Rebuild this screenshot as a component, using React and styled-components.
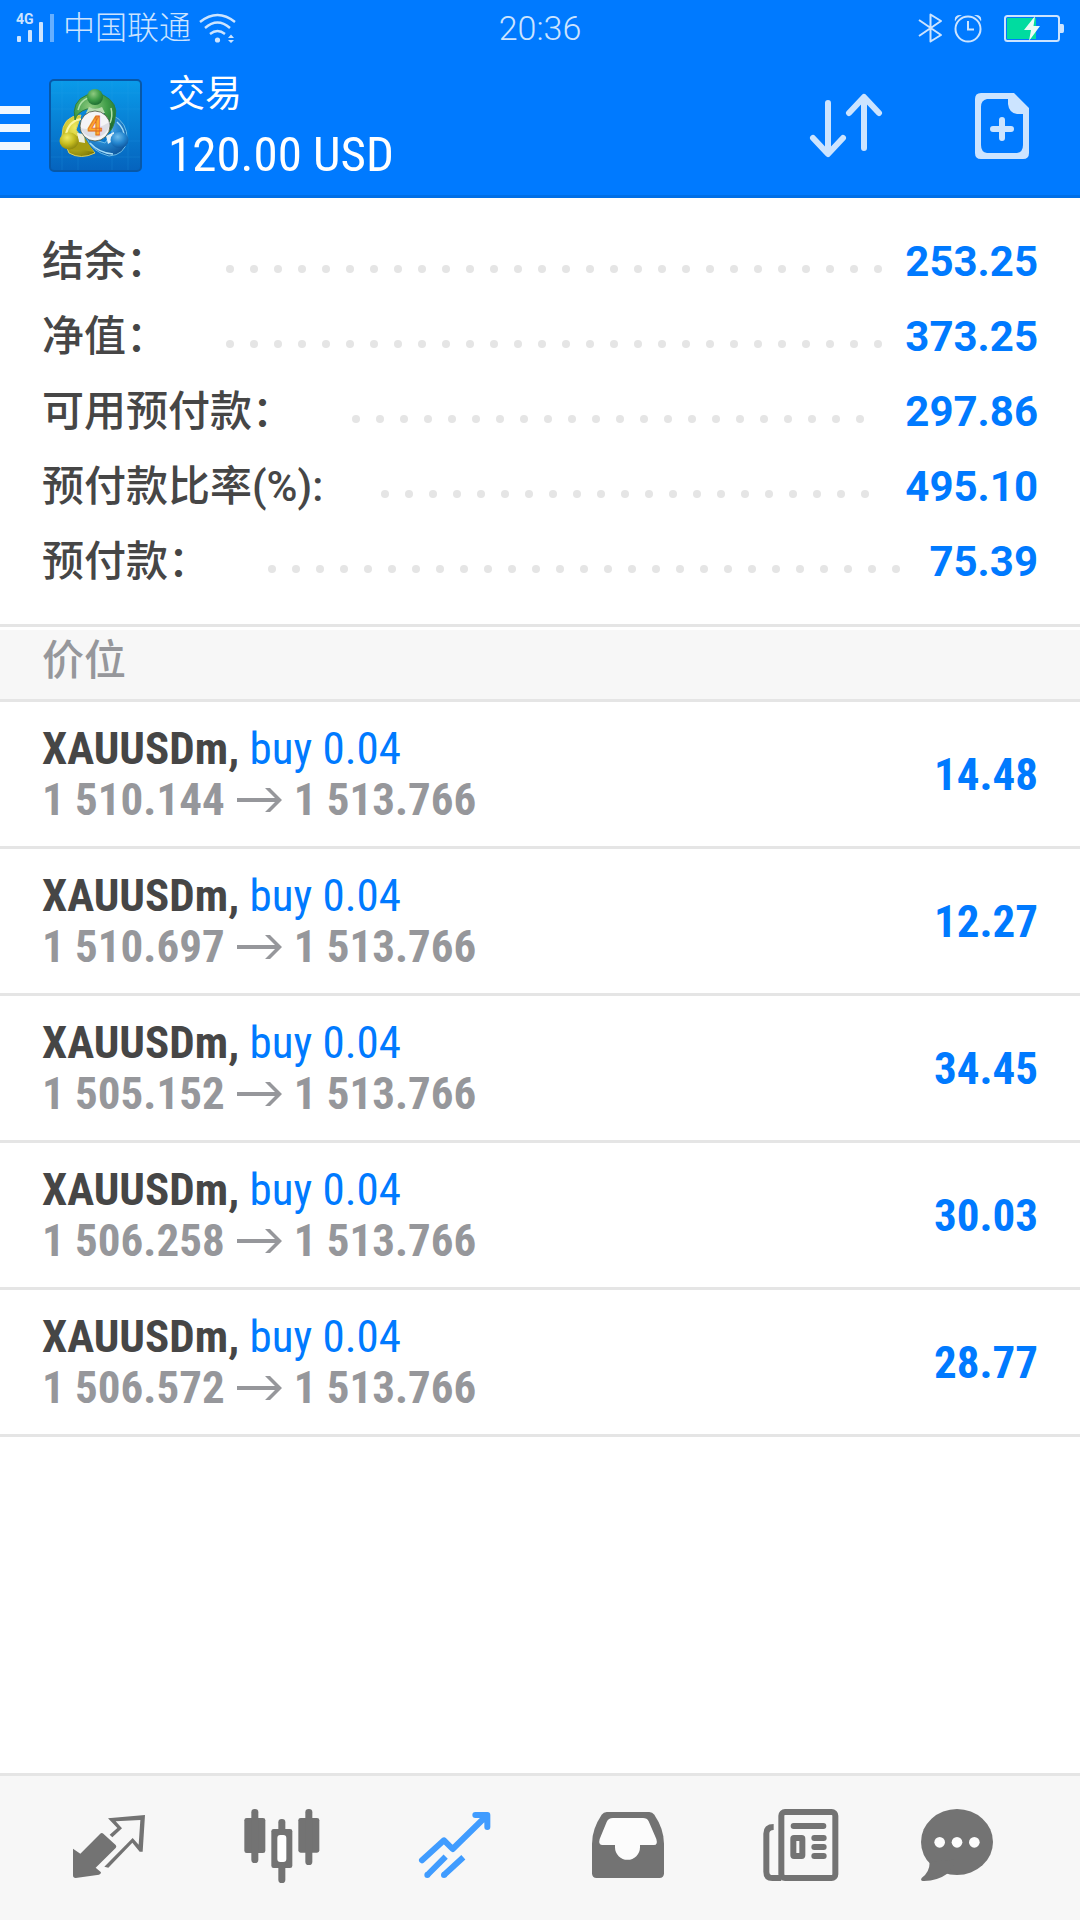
import React from 'react';
import styled, {createGlobalStyle} from "styled-components";

const GlobalStyle = createGlobalStyle`
	:root {
		--blue: #007aff;
		--active: #409cff;
		--text: #464646;
		--muted: #96979b;
		--line: #e5e5e5;
		--panel: #f7f7f7;
		--icon: #737373;
		--soft: #cce4ff;
		--sans: Roboto, "Noto Sans CJK SC", sans-serif;
		--narrow: "Roboto Condensed", "Liberation Sans Narrow", Roboto, "Noto Sans CJK SC", sans-serif;
	}

	* {
		box-sizing: border-box;
	}

	body {
		margin: 0;
		background: #fff;
		font-family: var(--sans);
	}

	svg {
		display: block;
	}
`;

const Page = styled.div`
	min-height: 100vh;
	display: flex;
	flex-direction: column;
`;

const Header = styled.header`
	background: var(--blue);
	border-bottom: 3px solid #006fe6;
`;

const StatusBar = styled.div`
	height: 56px;
	padding: 0 16px;
	display: grid;
	grid-template-columns: 1fr auto 1fr;
	align-items: center;
	color: var(--soft);
	font-size: 34px;
	font-weight: 300;
	line-height: 56px;
`;

const StatusGroup = styled.div`
	display: flex;
	align-items: center;
	justify-content: ${props => props.$end ? "flex-end" : "flex-start"};
	gap: ${props => props.$end ? "11px" : "8px"};
`;

const Carrier = styled.span`
	font-size: 32px;
`;

const Toolbar = styled.div`
	height: 139px;
	padding-right: 51px;
	display: flex;
	align-items: center;
`;

const IconButton = styled.button`
	border: 0;
	padding: 0;
	background: none;
	color: var(--soft);
	cursor: pointer;
`;

const MenuButton = styled(IconButton)`
	width: 30px;
	margin-right: 19px;
	padding-top: 4px;
	display: flex;
	flex-direction: column;
	gap: 10px;

	span {
		height: 8px;
		width: 100%;
		background: #f0f7ff;
	}
`;

const Heading = styled.div`
	flex: 1;
	margin-left: 25px;
	padding-top: 4px;
	color: #fff;
`;

const Title = styled.h1`
	margin: 0;
	font-size: 37px;
	font-weight: 400;
	line-height: 54px;
`;

const Total = styled.div`
	font-family: var(--narrow);
	font-size: 49px;
	line-height: 66px;
`;

const Actions = styled.div`
	display: flex;
	align-items: center;
	gap: 91px;
`;

const Summary = styled.dl`
	margin: 0;
	padding: 26px 42px 25px;
	border-bottom: 3px solid var(--line);
`;

const SummaryRow = styled.div`
	height: 75px;
	display: flex;
	align-items: center;
	font-size: 42px;
	line-height: 75px;
`;

const Label = styled.dt`
	color: var(--text);
	font-weight: 500;
	white-space: nowrap;
`;

const Leader = styled.div`
	flex: 1;
	height: 8px;
	margin: 14px 19px 0 58px;
	display: flex;
	flex-wrap: wrap;
	gap: 16px;
	overflow: hidden;

	i {
		width: 8px;
		height: 8px;
		border-radius: 50%;
		background: var(--line);
	}
`;

const Value = styled.dd`
	margin: 0;
	color: var(--blue);
	font-weight: 700;
`;

const SectionTitle = styled.h2`
	height: 72px;
	margin: 3px 0 0;
	padding: 0 42px;
	background: var(--panel);
	border-bottom: 3px solid var(--line);
	color: var(--muted);
	font-size: 42px;
	font-weight: 500;
	line-height: 62px;
`;

const List = styled.ul`
	margin: 0;
	padding: 0;
	list-style: none;
`;

const Position = styled.li`
	padding: 21px 42px;
	display: flex;
	align-items: center;
	justify-content: space-between;
	border-bottom: 3px solid var(--line);
	font-family: var(--narrow);
	font-size: 45px;
	font-weight: 700;
	line-height: 51px;
`;

const Symbol = styled.div`
	color: var(--text);

	span {
		color: var(--blue);
		font-weight: 400;
	}
`;

const Prices = styled.div`
	display: flex;
	align-items: center;
	gap: 12px;
	color: var(--muted);
`;

const Profit = styled.div`
	color: var(--blue);
`;

const TabBar = styled.nav`
	height: 147px;
	margin-top: auto;
	padding: 0 53px 0 22px;
	display: grid;
	grid-template-columns: repeat(5, 173fr) 140fr;
	background: var(--panel);
	border-top: 3px solid var(--line);
`;

const Tab = styled.button`
	border: 0;
	padding: 0;
	background: none;
	display: flex;
	align-items: center;
	justify-content: center;
	color: ${props => props.$active ? "var(--active)" : "var(--icon)"};
	cursor: pointer;

	svg {
		width: 78px;
		height: 78px;
	}
`;

const SignalIcon = () => (
	<svg width="39" height="36" viewBox="0 -4 39 36" fill="currentColor">
		<text x="0" y="10" fontSize="14" fontWeight="700" fontFamily="Roboto, sans-serif">4G</text>
		<rect x="1" y="22" width="4" height="6" rx="1"/>
		<rect x="12" y="16" width="4" height="12" rx="1"/>
		<rect x="23" y="8" width="4" height="20" rx="1"/>
		<rect x="34" y="0" width="4" height="28" opacity=".5"/>
	</svg>
);

const WifiIcon = () => (
	<svg width="38" height="30" viewBox="0 0 38 30" fill="none" stroke="currentColor" strokeWidth="2.4">
		<path d="M1 9Q18.500-5 36 9M6 15Q18.500 4 31 15M11 21Q18.500 15 26 21"/>
		<circle cx="18.500" cy="27" r="2.600" fill="currentColor" stroke="none"/>
		<path d="M29 25L32 21.500L35 25ZM29 27L32 30L35 27Z" fill="currentColor" stroke="none"/>
	</svg>
);

const BluetoothIcon = () => (
	<svg width="25" height="30" viewBox="0 0 25 30" fill="none" stroke="currentColor" strokeWidth="2" strokeLinejoin="round">
		<path d="M1 7L23 22L12.500 28.500V1.500L23 8L1 23"/>
	</svg>
);

const AlarmIcon = () => (
	<svg width="28" height="30" viewBox="0 0 28 30" fill="none" stroke="currentColor" strokeWidth="2">
		<circle cx="14" cy="16" r="12.500"/>
		<path d="M14 8V16.500H20"/>
		<path d="M1 8.500Q-.5 1 8 2Q3 4 1 8.500ZM27 8.500Q28.500 1 20 2Q25 4 27 8.500Z" fill="currentColor" stroke="none"/>
	</svg>
);

const BatteryIcon = () => (
	<svg width="60" height="27" viewBox="0 0 60 27">
		<rect x="1" y="1" width="54" height="25" rx="2.500" fill="none" stroke="currentColor" strokeWidth="2"/>
		<rect x="3" y="3" width="29" height="21" fill="#00dca0"/>
		<path d="M56 9H58.500Q60 9 60 11V16Q60 18 58.500 18H56Z" fill="currentColor"/>
		<path d="M31 1L20 15H27L25 26L36 11H29.500Z" fill="#e9fbf5"/>
	</svg>
);

const LogoIcon = () => (
	<svg width="94" height="94" viewBox="0 0 94 94" role="img" aria-label="MetaTrader 4">
		<defs>
			<linearGradient id="tile" x1="0" y1="0" x2="0" y2="1">
				<stop offset="0" stopColor="#0a9bea"/>
				<stop offset="1" stopColor="#0563bd"/>
			</linearGradient>
			<radialGradient id="green" cx=".4" cy=".3" r=".8">
				<stop offset="0" stopColor="#8fca80"/>
				<stop offset=".5" stopColor="#3f9d48"/>
				<stop offset="1" stopColor="#14602a"/>
			</radialGradient>
			<radialGradient id="yellow" cx=".4" cy=".3" r=".8">
				<stop offset="0" stopColor="#f0ea62"/>
				<stop offset=".5" stopColor="#c4bb1f"/>
				<stop offset="1" stopColor="#7c7708"/>
			</radialGradient>
			<radialGradient id="blue" cx=".4" cy=".3" r=".8">
				<stop offset="0" stopColor="#6fbcec"/>
				<stop offset=".5" stopColor="#2486cf"/>
				<stop offset="1" stopColor="#0a4d94"/>
			</radialGradient>
		</defs>
		<rect x="1" y="1" width="91" height="91" rx="4" fill="url(#tile)" stroke="#0758a8" strokeWidth="2"/>
		<path d="M13 2V91M29 2V91M63 2V91M79 2V91M2 14H91M2 30H91M2 62H91M2 78H91" stroke="#2ca5ea" strokeWidth="1" opacity=".2"/>
		<path d="M32 36Q13 37 13 57L20 74Q32 81 46 74L35 61L27 51Z" fill="url(#yellow)" stroke="#d8d060" strokeWidth="1"/>
		<path d="M32 40Q20 42 17 55" fill="none" stroke="#fbf6a5" strokeWidth="2"/>
		<path d="M20 63Q29 55 34 56L45 73Q31 70 20 71Z" fill="#a59c12"/>
		<path d="M28 54L35 55L36 64L30 63Z" fill="#eef0df"/>
		<path d="M63 36Q79 43 78 61Q76 76 60 77Q43 73 37 58L56 64L63 54Z" fill="url(#blue)" stroke="#6bbce8" strokeWidth="1"/>
		<path d="M68 43Q76 50 75 59M41 64Q50 74 64 75" fill="none" stroke="#a3dcf9" strokeWidth="1.500"/>
		<path d="M57 57L65 53L65 61L59 65Z" fill="#e2f1fa"/>
		<path d="M26 41Q22 22 38 16H54Q70 24 66 39Q65 50 58 55L57 42Q57 32 49 30H38Q28 33 26 41Z" fill="url(#green)" stroke="#2f7f3d" strokeWidth="1"/>
		<path d="M29 31Q31 22 39 19M62 29Q64 37 61 44" fill="none" stroke="#b0e0a8" strokeWidth="1.500"/>
		<path d="M40 28Q46 31 53 28L56 34H37Z" fill="#b9dcb0"/>
		<circle cx="46" cy="18" r="8" fill="url(#green)"/>
		<ellipse cx="20" cy="62" rx="9.500" ry="8.500" fill="url(#yellow)"/>
		<ellipse cx="70.500" cy="61" rx="9" ry="8" fill="url(#blue)"/>
		<circle cx="46" cy="47" r="15" fill="#f4f4f6" stroke="#47543b" strokeWidth=".8"/>
		<path d="M31.500 49Q45 53 60.500 43A15 15 0 0 1 31.500 49Z" fill="#dddde4"/>
		<text x="46" y="56" fontSize="26" fontWeight="700" textAnchor="middle" fill="#ffac2c" stroke="#e06a25" strokeWidth=".8" fontFamily="Roboto, sans-serif">4</text>
	</svg>
);

const SortIcon = () => (
	<svg width="76" height="66" viewBox="0 0 76 66" fill="none" stroke="currentColor" strokeWidth="6" strokeLinecap="round" strokeLinejoin="round">
		<path d="M20 10V60M5 45L20 61L35 45M56 55V6M41 20L56 4L71 20"/>
	</svg>
);

const NewOrderIcon = () => (
	<svg width="54" height="66" viewBox="0 0 54 66" fill="currentColor">
		<path fillRule="evenodd" d="M6 0H39L54 15V60Q54 66 48 66H6Q0 66 0 60V6Q0 0 6 0ZM12 6Q6 7 6 14V52Q6 59 12 60H42Q48 59 48 52V21H42Q34 20 33 11V6Z"/>
		<path d="M27 27V45M18 36H36" stroke="currentColor" strokeWidth="6" strokeLinecap="round"/>
	</svg>
);

const PriceArrow = () => (
	<svg width="45" height="26" viewBox="0 0 45 26" fill="currentColor">
		<path d="M0 11H38L28 1H33L45 13L33 25H28L38 15H0Z"/>
	</svg>
);

const QuotesIcon = () => (
	<svg viewBox="0 0 234 234" fill="currentColor">
		<path d="M9 119L31 134L90 75Q95 70 100 74L137 108Q141 113 137 117L77 176L93 190Q93 196 87 197L17 207Q9 207 9 199Z"/>
		<path d="M114 28L225 18L218 128H209L187 101L115 176L103 173L188 87L206 107L211 33L137 37L156 58L127 85L119 77L142 57Z"/>
	</svg>
);

const ChartIcon = () => (
	<svg viewBox="0 0 234 234" fill="currentColor">
		<rect x="4" y="27" width="63" height="105" rx="7"/>
		<rect x="25" y="0" width="21" height="162" rx="10"/>
		<rect x="85" y="60" width="63" height="117" rx="7"/>
		<rect x="106" y="30" width="21" height="192" rx="10"/>
		<rect x="103" y="78" width="27" height="81" rx="9" fill="#fff"/>
		<rect x="166" y="27" width="63" height="104" rx="7"/>
		<rect x="187" y="0" width="21" height="168" rx="10"/>
	</svg>
);

const TradeIcon = () => (
	<svg viewBox="0 0 234 234" fill="none" stroke="currentColor" strokeWidth="18">
		<path d="M18 154L84 94L110 120L211 21M178 18H214V54" strokeLinecap="round" strokeLinejoin="round"/>
		<path d="M34 198L89 143M84 198L142 145"/>
		<circle cx="34" cy="198" r="9" fill="currentColor" stroke="none"/>
		<circle cx="84" cy="198" r="9" fill="currentColor" stroke="none"/>
	</svg>
);

const HistoryIcon = () => (
	<svg viewBox="0 0 234 234" fill="currentColor">
		<path d="M53 9H181Q190 9 196 17Q225 60 225 104V193Q225 207 211 207H23Q9 207 9 193V104Q9 60 38 17Q44 9 53 9Z"/>
		<path d="M72 27H162Q174 27 179 37L202 90Q207 108 195 108H153V115A37.500 37.500 0 0 1 78 115V108H41Q27 108 32 90L53 39Q58 27 72 27Z" fill="#fcfcfc"/>
	</svg>
);

const NewsIcon = () => (
	<svg viewBox="0 0 234 234" fill="none" stroke="currentColor" strokeWidth="18">
		<rect x="58" y="9" width="162" height="198" rx="11"/>
		<path d="M35 54Q13 54 13 74V188Q13 207 31 207H58"/>
		<path d="M95 51H184M157 87H185M157 114H185M157 141H185" strokeLinecap="round"/>
		<rect x="94" y="87" width="27" height="54" rx="2"/>
	</svg>
);

const ChatIcon = () => (
	<svg viewBox="0 0 234 234" fill="currentColor">
		<ellipse cx="117" cy="99" rx="108" ry="99"/>
		<path d="M35 160Q35 190 11 207Q6 215 15 216Q57 217 90 193L120 150Z"/>
		<circle cx="65" cy="100" r="16" fill="#fcfcfc"/>
		<circle cx="117" cy="100" r="16" fill="#fcfcfc"/>
		<circle cx="169" cy="100" r="16" fill="#fcfcfc"/>
	</svg>
);

const summary = [
	{label: "结余：", value: "253.25"},
	{label: "净值：", value: "373.25"},
	{label: "可用预付款：", value: "297.86"},
	{label: "预付款比率(%):", value: "495.10"},
	{label: "预付款：", value: "75.39"},
];

const positions = [
	{open: "1 510.144", profit: "14.48"},
	{open: "1 510.697", profit: "12.27"},
	{open: "1 505.152", profit: "34.45"},
	{open: "1 506.258", profit: "30.03"},
	{open: "1 506.572", profit: "28.77"},
];

const tabs = [
	{name: "Quotes", Icon: QuotesIcon},
	{name: "Chart", Icon: ChartIcon},
	{name: "Trade", Icon: TradeIcon},
	{name: "History", Icon: HistoryIcon},
	{name: "News", Icon: NewsIcon},
	{name: "Chat", Icon: ChatIcon},
];

const dots = Array.from({length: 60});

const App = () => {
	return (
		<Page>
			<GlobalStyle/>
			<Header>
				<StatusBar>
					<StatusGroup>
						<SignalIcon/>
						<Carrier>中国联通</Carrier>
						<WifiIcon/>
					</StatusGroup>
					<span>20:36</span>
					<StatusGroup $end>
						<BluetoothIcon/>
						<AlarmIcon/>
						<span/>
						<BatteryIcon/>
					</StatusGroup>
				</StatusBar>
				<Toolbar>
					<MenuButton aria-label="Menu"><span/><span/><span/></MenuButton>
					<LogoIcon/>
					<Heading>
						<Title>交易</Title>
						<Total>120.00 USD</Total>
					</Heading>
					<Actions>
						<IconButton aria-label="Sort"><SortIcon/></IconButton>
						<IconButton aria-label="New order"><NewOrderIcon/></IconButton>
					</Actions>
				</Toolbar>
			</Header>
			<Summary>
				{summary.map(({label, value}) => (
					<SummaryRow key={label}>
						<Label>{label}</Label>
						<Leader aria-hidden="true">{dots.map((_, i) => <i key={i}/>)}</Leader>
						<Value>{value}</Value>
					</SummaryRow>
				))}
			</Summary>
			<SectionTitle>价位</SectionTitle>
			<List>
				{positions.map(({open, profit}) => (
					<Position key={open}>
						<div>
							<Symbol>XAUUSDm, <span>buy 0.04</span></Symbol>
							<Prices>{open}<PriceArrow/>1 513.766</Prices>
						</div>
						<Profit>{profit}</Profit>
					</Position>
				))}
			</List>
			<TabBar>
				{tabs.map(({name, Icon}) => (
					<Tab key={name} aria-label={name} $active={name === "Trade"}><Icon/></Tab>
				))}
			</TabBar>
		</Page>
	);
}

export default App;
